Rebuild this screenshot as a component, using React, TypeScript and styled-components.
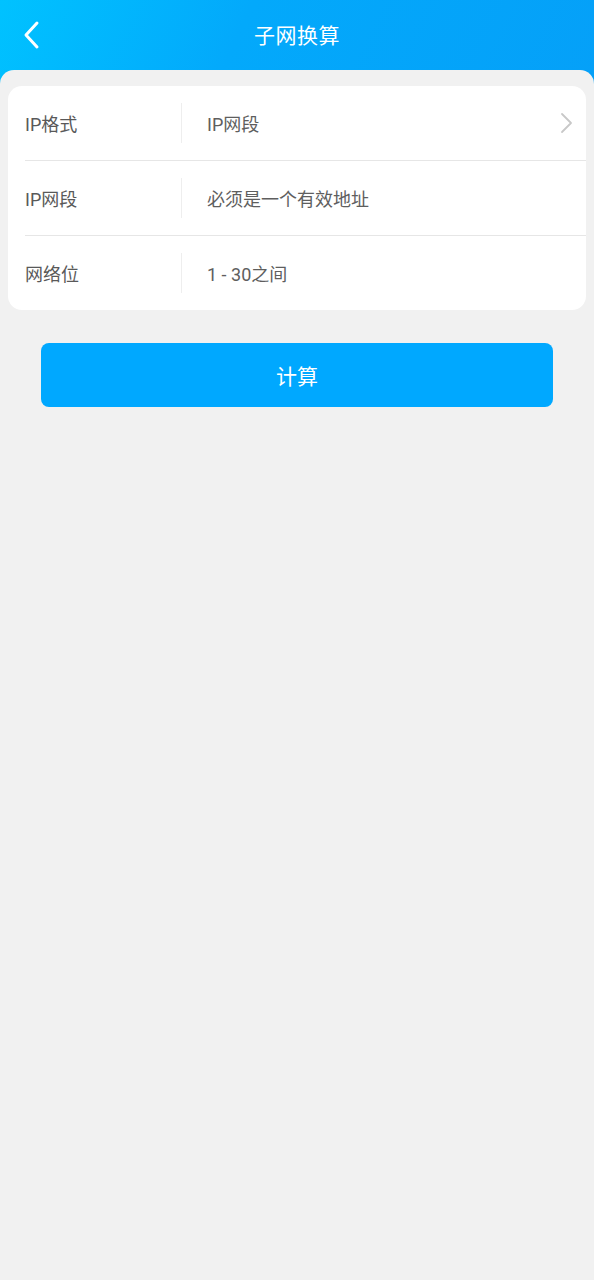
import React from 'react';
import styled, { createGlobalStyle } from 'styled-components';

const GlobalStyle = createGlobalStyle`
  html, body {
    margin: 0;
    padding: 0;
    background: #f1f1f1;
  }
  body {
    font-family: "Roboto", "Noto Sans CJK SC", sans-serif;
  }
`;

type Field = {
  label: string;
  value: string;
  arrow?: boolean;
};

const fields: Field[] = [
  { label: 'IP格式', value: 'IP网段', arrow: true },
  { label: 'IP网段', value: '必须是一个有效地址' },
  { label: '网络位', value: '1 - 30之间' },
];

const App: React.FC = () => {
  return (
    <Page>
      <GlobalStyle />
      <Header>
        <BackBtn>
          <svg width="20" height="30" viewBox="0 0 20 30" fill="none">
            <path d="M15 3 L4 15 L15 27" stroke="#fff" strokeWidth="3" strokeLinecap="round" strokeLinejoin="round" />
          </svg>
        </BackBtn>
        <Title>子网换算</Title>
      </Header>
      <Body>
        <Card>
          {fields.map((f) => (
            <Row key={f.label}>
              <Label>{f.label}</Label>
              <Divider />
              <Value>{f.value}</Value>
              {f.arrow && (
                <Arrow>
                  <svg width="14" height="22" viewBox="0 0 14 22" fill="none">
                    <path d="M3 2 L12 11 L3 20" stroke="#c8c8c8" strokeWidth="1.8" strokeLinecap="round" strokeLinejoin="round" />
                  </svg>
                </Arrow>
              )}
            </Row>
          ))}
        </Card>
        <SubmitBtn>计算</SubmitBtn>
      </Body>
    </Page>
  );
};

export default App;

const Page = styled.div`
  min-height: 1280px;
  background:
    linear-gradient(115deg, #00c2ff 0%, #03a9fb 40%, #05a0f8 100%) top / 100% 90px no-repeat,
    #f1f1f1;
`;

const Header = styled.div`
  position: relative;
  height: 70px;
  display: flex;
  align-items: center;
  justify-content: center;
`;

const BackBtn = styled.div`
  position: absolute;
  left: 22px;
  top: 20px;
  width: 20px;
  height: 30px;
  display: flex;
`;

const Title = styled.div`
  color: #fff;
  font-size: 21px;
  letter-spacing: 0.5px;
  margin-bottom: 2px;
`;

const Body = styled.div`
  background: #f1f1f1;
  border-radius: 14px 14px 0 0;
  padding: 16px 8px 0;
  min-height: 1194px;
`;

const Card = styled.div`
  background: #fff;
  border-radius: 14px;
  padding-left: 17px;
  overflow: hidden;
`;

const Row = styled.div`
  display: flex;
  align-items: center;
  height: 74px;
  border-bottom: 1px solid #e6e6e6;
  &:last-child {
    border-bottom: none;
  }
`;

const Label = styled.div`
  width: 156px;
  font-size: 18px;
  color: #595959;
`;

const Divider = styled.div`
  width: 1px;
  height: 40px;
  background: #eeeeee;
`;

const Value = styled.div`
  flex: 1;
  margin-left: 25px;
  font-size: 18px;
  color: #5e5e5e;
`;

const Arrow = styled.div`
  display: flex;
  margin-right: 13px;
`;

const SubmitBtn = styled.button`
  display: block;
  width: 512px;
  height: 64px;
  margin: 33px auto 0;
  border: none;
  border-radius: 8px;
  background: #00a8ff;
  color: #fff;
  font-family: "Roboto", "Noto Sans CJK SC", sans-serif;
  font-size: 21px;
`;
